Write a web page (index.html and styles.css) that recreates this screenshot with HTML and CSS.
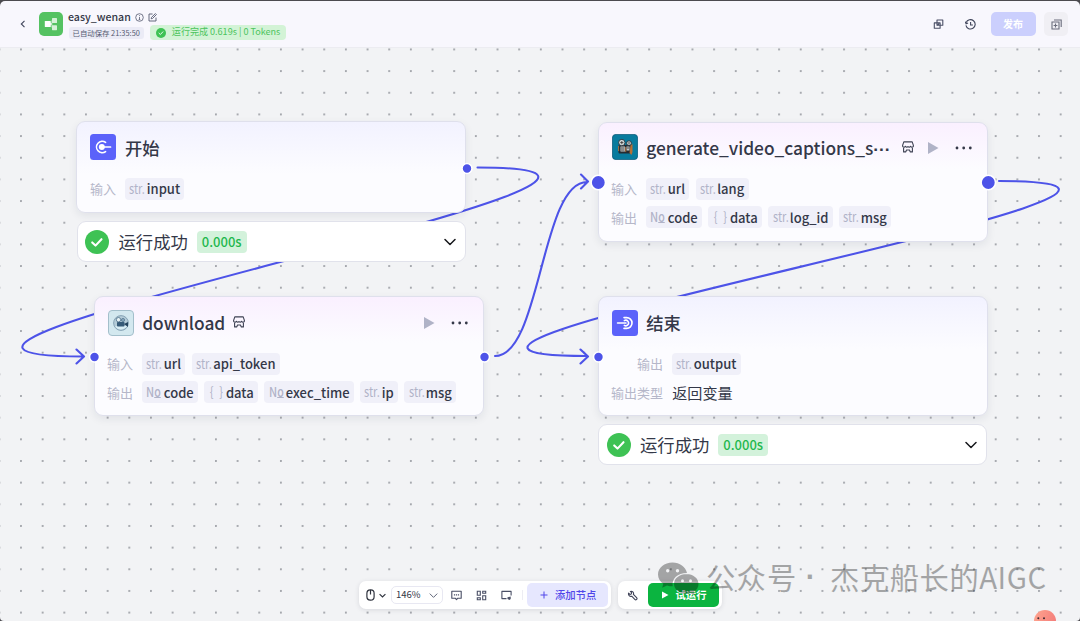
FILE: index.html
```html
<!DOCTYPE html>
<html lang="zh-CN">
<head>
	<meta charset="UTF-8">
	<title>easy_wenan</title>
	<link rel="stylesheet" href="styles.css">
</head>
<body>
	<!-- 公用图标 -->
	<svg class="defs" width="0" height="0">
		<symbol id="i_shop" viewBox="0 0 12 12"><path d="M1.800 .9h8.400l1.100 3.300a1.400 1.500 0 0 1-2.700 1 1.500 1.500 0 0 1-2.600.3 1.500 1.500 0 0 1-2.600-.3 1.400 1.500 0 0 1-2.700-1zM1.600 7v3.900h2.200L4.500 9h3l.7 1.900h2.200V7" fill="none" stroke="#3c4052" stroke-width="1.100" stroke-linejoin="round"/></symbol>
		<symbol id="i_check" viewBox="0 0 24 24"><circle cx="12" cy="12" r="12" fill="#3ec254"/><path d="M7.200 12.400l3.300 3.200 6-6.400" fill="none" stroke="#fff" stroke-width="2.100" stroke-linecap="round" stroke-linejoin="round"/></symbol>
		<symbol id="i_down" viewBox="0 0 12 12"><path d="M1 3.500l5 5 5-5" fill="none" stroke="currentColor" stroke-width="1.500" stroke-linecap="round" stroke-linejoin="round"/></symbol>
	</svg>
	<div id="container">
		<!-- 顶栏 -->
		<div id="header">
			<svg class="back" viewBox="0 0 8 10"><path d="M5.500 1.800L2.300 5l3.200 3.200" fill="none" stroke="#41465c" stroke-width="1.100"/></svg>
			<svg class="logo" viewBox="0 0 24 24"><rect width="24" height="24" rx="5" fill="#55c262"/><path d="M10 11.500h3V8.500h1M10 12.500h3v3h1" fill="none" stroke="#c9ecce" stroke-width="1"/><rect x="5.800" y="9" width="6" height="6" rx=".6" fill="#fff"/><rect x="13" y="6" width="5" height="5" rx=".6" fill="#d5f1d8"/><rect x="13" y="13.200" width="5" height="5" rx=".6" fill="#d5f1d8"/></svg>
			<div class="info">
				<div class="name">
					<span>easy_wenan</span>
					<svg class="i9" viewBox="0 0 9 9"><circle cx="4.500" cy="4.500" r="3.800" fill="none" stroke="#555a70" stroke-width=".8"/><path d="M4.500 4v2.600M4.500 2.200v.9M3.700 6.600h1.600" stroke="#555a70" stroke-width=".8"/></svg>
					<svg class="i9" viewBox="0 0 9 9"><path d="M4.600 1H1v7h7V4.600M3.200 5.800l.3-1.400L7.400.6l1 1-3.900 3.900z" fill="none" stroke="#555a70" stroke-width=".9"/></svg>
				</div>
				<div class="tags">
					<span class="saved">已自动保存 21:35:50</span>
					<span class="done"><svg viewBox="0 0 24 24"><use href="#i_check"/></svg>运行完成 0.619s | 0 Tokens</span>
				</div>
			</div>
			<div class="tools">
				<svg class="i11" viewBox="0 0 11 11"><path d="M4 1h5.800v5.200H4zM1.300 3.900h5.800v5.300H1.300zM4.200 6.600l1.900-1.900" fill="none" stroke="#4a4f66" stroke-width="1.100" stroke-linejoin="round"/></svg>
				<svg class="i11" viewBox="0 0 11 11"><path d="M1.100 3.600A4.700 4.700 0 1 1 .9 6.400M.3 2.600l.8 2.200 2-.7M5.600 3v3h2.300" fill="none" stroke="#41465c" stroke-width="1.100"/></svg>
				<a href="#" class="publish">发布</a>
				<a href="#" class="more"><svg class="i11" viewBox="0 0 11 11"><path d="M1 3h7v7H1zM3 1h7.200v7M4.500 4.600v3.800M2.600 6.500h3.800" fill="none" stroke="#6a6d7c" stroke-width="1.100"/></svg></a>
			</div>
		</div>
		<!-- 画布 -->
		<div id="canvas">
			<svg class="layer" viewBox="0 48 1080 573">
				<defs>
					<pattern id="dots" x="10.200" y="38.600" width="21.660" height="21.660" patternUnits="userSpaceOnUse"><circle cx="10.800" cy="10.800" r=".9" fill="#85888f"/></pattern>
				</defs>
				<rect y="48" width="1080" height="573" fill="url(#dots)"/>
				<g class="edges">
					<path d="M477.500 167.500C792 167.500 -231 356.500 83 356.500M76.500 349.500l7.500 7-7.500 7"/>
					<path d="M495 356C541 356 541 182 587 182M581 174.500l7 7-7 7"/>
					<path d="M999 181C1313 181 274 356 587 356M580.500 349.500l7.500 7-7.500 7"/>
				</g>
			</svg>

			<div class="node start blue">
				<div class="title">
					<svg class="icon" viewBox="0 0 26 26"><rect width="26" height="26" rx="3.500" fill="#5b62fa"/><path d="M15.600 8.400a5.700 5.700 0 1 0 0 9.200" fill="none" stroke="#fff" stroke-width="1.600" stroke-linecap="round"/><circle cx="11.800" cy="13" r="3" fill="#fff"/><path d="M12 13h8.500" stroke="#fff" stroke-width="1.700" stroke-linecap="round"/></svg>
					<span class="text">开始</span>
				</div>
				<div class="row"><label>输入</label><span class="chip"><span class="type">str.</span>input</span></div>
			</div>
			<div class="result r1"><svg class="ok"><use href="#i_check"/></svg><span class="text">运行成功</span><span class="time">0.000s</span><svg class="down"><use href="#i_down"/></svg></div>

			<div class="node video pink">
				<div class="title">
					<svg class="icon" viewBox="0 0 26 26"><rect x=".4" y=".4" width="25.200" height="25.200" rx="3.500" fill="#087b9e" stroke="#0a5877" stroke-width=".8"/><rect x="6.500" y="11" width="13" height="8.500" rx="1" fill="#252c33"/><path d="M18.500 11l2-1v8l-1 3-2-2z" fill="#b86f34"/><circle cx="9.800" cy="8.600" r="3.200" fill="#d3dadb" stroke="#253039" stroke-width=".9"/><circle cx="17" cy="9.200" r="2.400" fill="#c5ced0" stroke="#253039" stroke-width=".9"/><path d="M8.500 12.500h4.500v5H8.500zM14.500 12.500h3v4h-3z" fill="#c3c9ca"/><path d="M9.800 7v3.200M8.200 8.600h3.200M17 8v2.400M9 14h3.500M9 16h3.500M15 14h2" stroke="#33302e" stroke-width=".8"/><path d="M6.600 12v5M13.700 13v5" stroke="#c87b39" stroke-width=".8"/></svg>
					<span class="text">generate_video_captions_s<i>···</i></span>
					<svg class="shop"><use href="#i_shop"/></svg>
					<svg class="play" viewBox="0 0 12 12"><path d="M1 0l10.500 6L1 12z" fill="#b0b3c7"/></svg>
					<svg class="dots" viewBox="0 0 17 4"><circle cx="2" cy="2" r="1.400"/><circle cx="8.700" cy="2" r="1.400"/><circle cx="15.300" cy="2" r="1.400"/></svg>
				</div>
				<div class="row"><label>输入</label><span class="chip"><span class="type">str.</span>url</span><span class="chip"><span class="type">str.</span>lang</span></div>
				<div class="row"><label>输出</label><span class="chip"><span class="type no">N<u>o</u></span>code</span><span class="chip"><span class="type obj">{ }</span>data</span><span class="chip"><span class="type">str.</span>log_id</span><span class="chip"><span class="type">str.</span>msg</span></div>
			</div>

			<div class="node download pink">
				<div class="title">
					<svg class="icon" viewBox="0 0 26 26"><rect x=".5" y=".5" width="25" height="25" rx="3.500" fill="#d3e8ef" stroke="#a3bfcb"/><circle cx="13" cy="13" r="7.400" fill="#b4ccd8" stroke="#7796a9" stroke-width=".8"/><path d="M7 16.500c3 4 9 4 12.500-.5-4-1-9-.8-12.500.5z" fill="#d9eef5"/><rect x="9" y="12" width="7.500" height="4.500" rx=".8" fill="#365b78"/><path d="M16 14l4-2v5z" fill="#25455f"/><circle cx="10.500" cy="9.700" r="2.200" fill="#e7f2f5" stroke="#4c6f89" stroke-width=".8"/><circle cx="15" cy="10" r="1.600" fill="#87a8ba" stroke="#4c6f89" stroke-width=".7"/></svg>
					<span class="text">download</span>
					<svg class="shop"><use href="#i_shop"/></svg>
					<svg class="play" viewBox="0 0 12 12"><path d="M1 0l10.500 6L1 12z" fill="#b0b3c7"/></svg>
					<svg class="dots" viewBox="0 0 17 4"><circle cx="2" cy="2" r="1.400"/><circle cx="8.700" cy="2" r="1.400"/><circle cx="15.300" cy="2" r="1.400"/></svg>
				</div>
				<div class="row"><label>输入</label><span class="chip"><span class="type">str.</span>url</span><span class="chip"><span class="type">str.</span>api_token</span></div>
				<div class="row"><label>输出</label><span class="chip"><span class="type no">N<u>o</u></span>code</span><span class="chip"><span class="type obj">{ }</span>data</span><span class="chip"><span class="type no">N<u>o</u></span>exec_time</span><span class="chip"><span class="type">str.</span>ip</span><span class="chip"><span class="type">str.</span>msg</span></div>
			</div>

			<div class="node end blue">
				<div class="title">
					<svg class="icon" viewBox="0 0 26 26"><rect width="26" height="26" rx="3.500" fill="#5b62fa"/><path d="M12 7.600h2.600a5.300 5.300 0 0 1 0 10.800H12" fill="none" stroke="#fff" stroke-width="1.600" stroke-linecap="round"/><path d="M5.500 13H14M12.300 10.600a2.800 2.800 0 1 1 0 4.800" fill="none" stroke="#fff" stroke-width="1.500" stroke-linecap="round"/></svg>
					<span class="text">结束</span>
				</div>
				<div class="row"><label>输出</label><span class="chip"><span class="type">str.</span>output</span></div>
				<div class="row"><label>输出类型</label><span class="value">返回变量</span></div>
			</div>
			<div class="result r2"><svg class="ok"><use href="#i_check"/></svg><span class="text">运行成功</span><span class="time">0.000s</span><svg class="down"><use href="#i_down"/></svg></div>

			<!-- 连接点 -->
			<svg class="layer ports" viewBox="0 48 1080 573">
				<circle cx="467" cy="168.500" r="5"/>
				<circle cx="94.500" cy="357" r="5"/>
				<circle cx="484.500" cy="357" r="5"/>
				<circle cx="598.500" cy="357" r="5"/>
				<circle cx="598.300" cy="182.500" r="7.200"/>
				<circle cx="988.300" cy="182.500" r="7.200"/>
			</svg>

			<!-- 底部工具条 -->
			<div id="toolbar">
				<div class="bar">
					<svg class="mouse" viewBox="0 0 9 12"><rect x=".9" y=".9" width="7.200" height="10.200" rx="3.400" fill="none" stroke="#30343f" stroke-width="1.200"/><path d="M4.500 1v4.500" stroke="#30343f" stroke-width="1.200"/></svg>
					<svg class="arrow" viewBox="0 0 12 12"><path d="M1 3.500l5 5 5-5" fill="none" stroke="#30343f" stroke-width="2"/></svg>
					<span class="zoom">146%<svg viewBox="0 0 12 12"><path d="M1 3.500l5 5 5-5" fill="none" stroke="#5e6376" stroke-width="1.300"/></svg></span>
					<svg class="i11" viewBox="0 0 11 11"><path d="M.8 1.200h9.400v7H6.800L5.500 9.700 4.200 8.200H.8z" fill="none" stroke="#4a4f66" stroke-width="1.100" stroke-linejoin="round"/><path d="M2.900 4.800h1.200M4.900 4.800h1.200M6.900 4.800h1.200" stroke="#4a4f66" stroke-width="1.200"/></svg>
					<svg class="i11" viewBox="0 0 11 11"><path d="M1.300 1.300h3v4h-3zM6.700 1.300h3v2h-3zM1.300 7.700h3v2h-3zM6.700 5.700h3v4h-3z" fill="none" stroke="#4a4f66" stroke-width="1.100"/></svg>
					<svg class="i11" viewBox="0 0 11 11"><path d="M5.500 8.600H.9V1.400h9.200v4" fill="none" stroke="#4a4f66" stroke-width="1.100" stroke-linejoin="round"/><path d="M6.300 7.400l3.400-1v2.700l-1.200 1L6.600 9z" fill="#4a4f66"/></svg>
					<span class="line"></span>
					<a href="#" class="add"><svg viewBox="0 0 8 8"><path d="M4 .5v7M.5 4h7" stroke="#5046e9" stroke-width="1"/></svg>添加节点</a>
				</div>
				<div class="bar">
					<svg class="wrench" viewBox="0 0 11 11"><path d="M1.600 3.100l1.300 1.300 1.400-.4.3-1.400-1.200-1.200c1.900-.6 3.700 1.100 3 3L9.600 7.600a1.200 1.200 0 0 1-1.800 1.800L4.700 6.200c-2 .7-3.700-1.200-3.100-3.100z" fill="none" stroke="#3f4358" stroke-width="1.100" stroke-linejoin="round"/></svg>
					<a href="#" class="run"><svg viewBox="0 0 8 8"><path d="M1 .5L7.500 4 1 7.500z" fill="#fff"/></svg>试运行</a>
				</div>
			</div>

			<div id="watermark">
				<svg viewBox="0 0 41 32"><path d="M14.500 0C6.500 0 0 5.400 0 12c0 3.800 2.100 7.100 5.300 9.300L4.200 25.300l4.800-2.400c1.800.6 3.600.8 5.700.8C13.500 16 19.500 10.500 29 10.400 27.700 4.300 21.700 0 14.500 0z"/><path d="M28.500 11.500c-7 0-12.500 4.400-12.500 9.900s5.500 9.900 12.500 9.900c1.500 0 3-.2 4.300-.6l4 2-.9-3.500c2.800-1.800 4.600-4.600 4.600-7.800 0-5.500-5.300-9.900-12-9.900z"/><circle cx="9.700" cy="8.200" r="1.700" class="eye"/><circle cx="19.500" cy="8.200" r="1.700" class="eye"/><circle cx="24.500" cy="18.300" r="1.500" class="eye"/><circle cx="32.500" cy="18.300" r="1.500" class="eye"/></svg>
				<span class="a">公众号</span><span class="dot">·</span><span class="b">杰克船长的AIGC</span>
			</div>
			<svg class="mascot" viewBox="0 0 22 22"><defs><linearGradient id="face" x1="0" x2="1" y2=".4"><stop offset="0" stop-color="#ffa58f"/><stop offset="1" stop-color="#f47f7b"/></linearGradient></defs><circle cx="11" cy="11" r="11" fill="url(#face)"/><circle cx="4.300" cy="8.300" r="1" fill="#3b2b33"/><circle cx="10" cy="8.300" r="1" fill="#3b2b33"/></svg>
		</div>
	</div>
</body>
</html>
```
FILE: styles.css
```css
/*reset*/
*{
	box-sizing: border-box;
}
a{
	text-decoration: none;
}
svg{
	display: block;
	flex: none;
}
body{
	margin: 0;
	height: 621px;
	overflow: hidden;
	background: #4c4b50;
	font: 14px/1.2 "Noto Sans CJK SC", sans-serif;
	color: #343848;
	white-space: nowrap;
}
.defs{
	position: absolute;
}
#container{
	display: flex;
	flex-direction: column;
	height: 621px;
	padding-top: 1px;
}
/*顶栏*/
#header{
	display: flex;
	align-items: center;
	height: 47px;
	padding: 0 12px 0 19px;
	background: #f8f7fd;
	border-bottom: 1px solid #ececf1;
	border-radius: 5px 5px 0 0;
}
.back{
	width: 8px;
	height: 10px;
}
.logo{
	width: 24px;
	height: 24px;
	margin: 0 6px 0 11.500px;
}
.info{
	padding-top: 2px;
}
.name{
	display: flex;
	align-items: center;
	gap: 4px;
	height: 15px;
	font-size: 10.600px;
	font-weight: 500;
}
.name span{
	margin-left: -.5px;
}
.i9{
	width: 9px;
	height: 9px;
}
.i11{
	width: 11px;
	height: 11px;
}
.tags{
	display: flex;
	align-items: center;
	gap: 6px;
	height: 16px;
}
.saved{
	height: 12px;
	padding: 0 4px;
	border-radius: 3px;
	background: #ebebf6;
	font-size: 7.400px;
	line-height: 12px;
	color: #565b72;
}
.done{
	display: flex;
	align-items: center;
	height: 15px;
	padding: 0 6px;
	border-radius: 4px;
	background: #d3f3d6;
	font-size: 9.050px;
	color: #4cc45d;
}
.done svg{
	width: 10px;
	height: 10px;
	margin-right: 6px;
}
.tools{
	display: flex;
	align-items: center;
	margin-left: auto;
}
.tools> .i11{
	margin-right: 21px;
}
.publish{
	width: 45px;
	height: 24px;
	margin: 0 8.500px 0 -6px;
	border-radius: 5px;
	background: #cbcffd;
	font-size: 10px;
	font-weight: 700;
	line-height: 24px;
	text-align: center;
	color: #fff;
}
.more{
	display: flex;
	align-items: center;
	justify-content: center;
	width: 24px;
	height: 24px;
	border-radius: 5px;
	background: #f0eff4;
}
/*画布*/
#canvas{
	position: relative;
	flex: 1;
	overflow: hidden;
	background: #f2f3f5;
	border-radius: 0 0 4px 4px;
}
.layer{
	position: absolute;
	left: 0;
	top: 0;
	width: 1080px;
	height: 573px;
}
.edges path{
	fill: none;
	stroke: #4d53e8;
	stroke-width: 2.100;
	stroke-linecap: round;
	stroke-linejoin: round;
}
.ports circle{
	fill: #4d53e8;
	stroke: #fff;
	stroke-width: 1.600;
}
/*节点*/
.node{
	position: absolute;
	width: 390px;
	padding: 12px;
	border: 1px solid #dfe0ec;
	border-radius: 9px;
	box-shadow: 0 3px 8px rgba(30, 35, 60, .08);
}
.blue{
	background: linear-gradient(#f2f2ff, #fcfcff 52px);
}
.pink{
	background: linear-gradient(#faf0ff, #fcfcff 46px);
}
.start{
	left: 76px;
	top: 73px;
	height: 92px;
	padding-left: 13px;
}
.video{
	left: 598px;
	top: 74px;
	height: 120px;
}
.download{
	left: 94px;
	top: 248px;
	height: 120px;
}
.end{
	left: 598px;
	top: 248px;
	height: 120px;
}
.title{
	display: flex;
	align-items: center;
	height: 26px;
	margin-bottom: 18px;
	font-size: 17.330px;
	font-weight: 500;
}
.title .text{
	padding-top: 2px;
}
.video .title{
	margin-top: -1px;
}
.video .title .icon, .end .title .icon, .download .title .icon{
	margin-left: .6px;
	margin-right: 8.600px;
}
.download .icon, .end .icon{
	margin-top: 1px;
}
.title .icon{
	width: 26px;
	height: 26px;
	margin-right: 9px;
}
.title .shop{
	width: 12px;
	height: 12px;
	margin: 0 auto 0 7.500px;
}
.title i{
	font: 700 17.330px/1 "Liberation Sans", sans-serif;
}
.video .title .shop{
	margin-left: 11px;
}
.title .play{
	width: 12px;
	height: 12px;
	margin-top: 2px;
	margin-right: 15.500px;
}
.title .dots{
	width: 17px;
	height: 4px;
	margin-top: 2px;
	margin-right: 3.500px;
	fill: #343848;
}
.row{
	display: flex;
	align-items: center;
	gap: 6.300px;
	height: 22px;
	margin-bottom: 6.300px;
}
.row label{
	width: 26px;
	margin-right: 2.900px;
	font-size: 13px;
	color: #b5b7c9;
}
.end .row label{
	width: 52px;
	text-align: right;
}
.chip{
	display: flex;
	align-items: center;
	height: 22px;
	padding: 0 4.300px;
	border-radius: 4px;
	background: #f0f0f9;
	font-size: 13px;
	font-weight: 500;
}
.type{
	width: 15px;
	margin-right: 2.300px;
	font-size: 13.500px;
	font-weight: 400;
	color: #b0b3c8;
	transform: translateY(-1px) scaleX(.82);
	transform-origin: 0 50%;
}
.type.no{
	font-weight: 500;
}
.no u{
	display: inline-block;
	height: 11px;
	border-bottom: 1px solid #b0b3c8;
	font-size: 13px;
	line-height: 10px;
	vertical-align: 0;
	text-decoration: none;
}
.obj{
	word-spacing: 4px;
	text-indent: 1px;
}
.value{
	font-size: 15.100px;
}
/*运行结果*/
.result{
	position: absolute;
	display: flex;
	align-items: center;
	width: 389px;
	height: 41px;
	padding: 0 8px 0 7px;
	border: 1px solid #e1e2eb;
	border-radius: 9px;
	background: #fff;
	font-size: 17.330px;
}
.result .text{
	padding-top: 1px;
}
.r1{
	left: 77px;
	top: 173px;
}
.r2{
	left: 598px;
	top: 376px;
}
.ok{
	width: 24px;
	height: 24px;
	margin-right: 9.500px;
}
.r2 .ok{
	margin-left: .5px;
}
.time{
	height: 22px;
	margin-left: 9px;
	padding: 0 5px;
	border-radius: 4px;
	background: #d3f2db;
	font-size: 13px;
	font-weight: 500;
	line-height: 22px;
	color: #1fb84e;
}
.down{
	width: 12px;
	height: 12px;
	margin-left: auto;
	margin-right: 1px;
	color: #17181c;
}
/*工具条*/
#toolbar{
	position: absolute;
	left: 359px;
	top: 533px;
	display: flex;
	gap: 7px;
}
.bar{
	display: flex;
	align-items: center;
	height: 28px;
	padding: 0 3px 0 7px;
	border-radius: 7px;
	background: #fff;
	box-shadow: 0 1px 5px rgba(30, 35, 60, .12);
}
.mouse{
	width: 9px;
	height: 12px;
}
.arrow{
	width: 7px;
	height: 7px;
	margin: 0 5px 0 4px;
}
.zoom{
	display: flex;
	align-items: center;
	justify-content: space-between;
	width: 52px;
	height: 18px;
	margin-right: 8px;
	padding: 0 4px;
	border: 1px solid #e8e8f2;
	border-radius: 5px;
	font-size: 9.500px;
}
.zoom svg{
	width: 9px;
	height: 9px;
}
.bar .i11{
	margin-right: 14.200px;
}
.line{
	width: 1px;
	height: 10px;
	margin: 0 4px 0 -4.500px;
	background: #ededf3;
}
.add, .run{
	display: flex;
	align-items: center;
	height: 24px;
	border-radius: 5px;
	font-size: 10.300px;
	font-weight: 500;
}
.add{
	width: 81px;
	padding-left: 12.500px;
	background: #e6e7fe;
	color: #5046e9;
}
.add svg{
	width: 8px;
	height: 8px;
	margin-right: 7.500px;
}
.wrench{
	width: 11px;
	height: 11px;
	margin: 0 9.500px 0 2px;
}
.run{
	width: 71px;
	padding-left: 13px;
	background: #0bb440;
	font-weight: 700;
	color: #fff;
}
.run svg{
	width: 8px;
	height: 8px;
	margin-right: 7px;
}
/*水印*/
#watermark{
	position: absolute;
	left: 658px;
	top: 507px;
	display: flex;
	align-items: center;
	height: 44px;
	font-size: 29.300px;
	font-weight: 400;
	color: #000;
	opacity: .32;
}
#watermark svg{
	width: 41px;
	height: 33px;
	margin-top: 2px;
}
#watermark .eye{
	fill: #f2f3f5;
}
#watermark .a{
	margin-left: 7px;
	letter-spacing: 1.200px;
}
#watermark .dot{
	width: 32.500px;
	padding-right: 6px;
	font-family: "Liberation Sans", sans-serif;
	font-weight: 700;
	text-align: center;
}
#watermark .b{
	letter-spacing: .55px;
}
.mascot{
	position: absolute;
	left: 1034px;
	top: 562px;
	width: 22px;
	height: 22px;
}
```
